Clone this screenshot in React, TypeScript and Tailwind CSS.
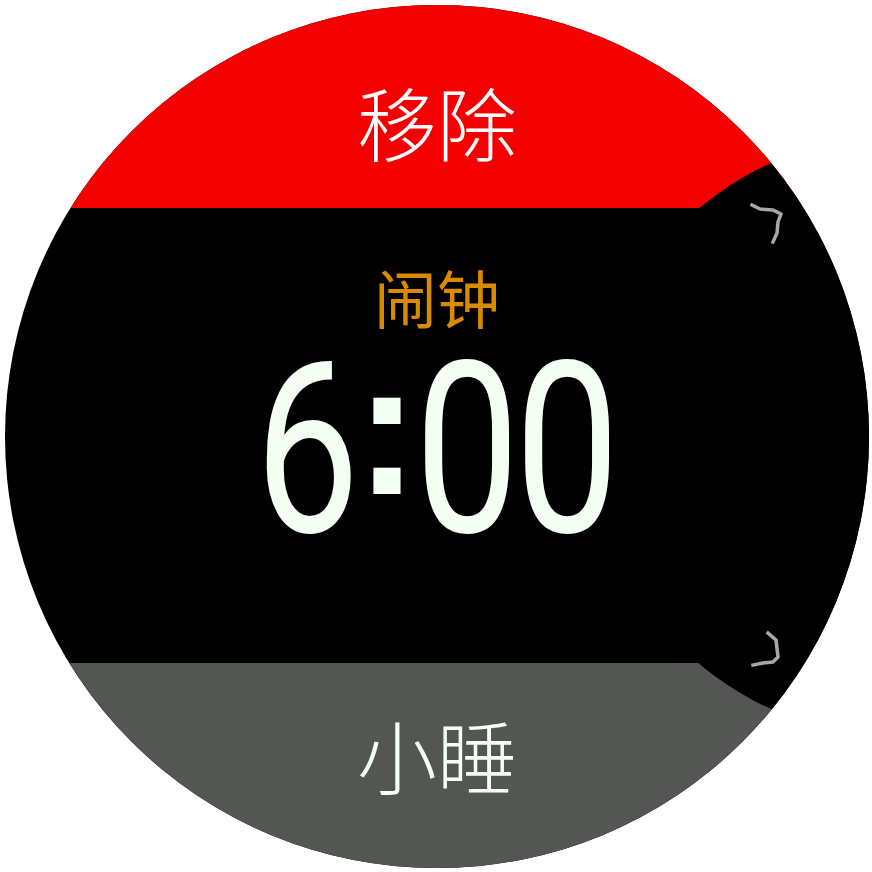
import React from 'react'

function Chevron({ d }: { d: string }) {
  return (
    <svg width="36" height="44" viewBox="0 0 36 44" fill="none">
      <path d={d} stroke="#a3aba3" strokeWidth="3.5" strokeLinejoin="round" strokeLinecap="square" />
    </svg>
  )
}

export default function App() {
  const cjk = "font-['Noto_Sans_CJK_SC','Noto_Sans',sans-serif]"
  const digit = "inline-block scale-x-[0.78] font-['Roboto','Liberation_Sans',sans-serif]"

  return (
    <div className="w-[872px] h-[872px] bg-white pl-[5px] pt-[5px]">
      <div className="relative w-[864px] h-[863px] rounded-full overflow-hidden flex flex-col bg-black">
        {/* top action */}
        <div className="h-[203px] bg-[#f50000] flex justify-center pt-[75px]">
          <span className={`relative z-10 text-[80px] leading-none font-light text-white ${cjk}`}>移除</span>
        </div>

        {/* main */}
        <div className="h-[455px] flex flex-col items-center pt-[56px]">
          <span className={`relative z-10 text-[63px] leading-none font-normal text-[#d98a00] ${cjk}`}>闹钟</span>
          <div className="relative z-10 flex mt-[4px] text-[239px] leading-none text-[#f4fff4]">
            <div className="w-[100px] flex justify-center">
              <span className={digit}>6</span>
            </div>
            <div className="w-[60px] flex justify-center">
              <span className="inline-block mt-[1px] text-[192px] leading-none font-bold font-['Liberation_Sans',sans-serif]">:</span>
            </div>
            <div className="w-[100px] flex justify-center">
              <span className={digit}>0</span>
            </div>
            <div className="w-[100px] flex justify-center">
              <span className={digit}>0</span>
            </div>
          </div>
        </div>

        {/* bottom action */}
        <div className="flex-1 bg-[#545654] flex justify-center pt-[50px]">
          <span className={`relative z-10 text-[80px] leading-none font-light text-[#f4fff4] ${cjk}`}>小睡</span>
        </div>

        {/* right side button notch */}
        <div className="absolute left-[589px] top-[132px] w-[598px] h-[598px] rounded-full bg-black" />
        <div className="absolute left-[745px] top-[197px]">
          <Chevron d="M2 3 L10 7 L23 8 L31 12 L28 20 L27 31 L23 40" />
        </div>
        <div className="absolute left-[745px] top-[625px]">
          <Chevron d="M18 3 L26 10 L28 27 L23 32 L13 33 L3 35" />
        </div>
      </div>
    </div>
  )
}
